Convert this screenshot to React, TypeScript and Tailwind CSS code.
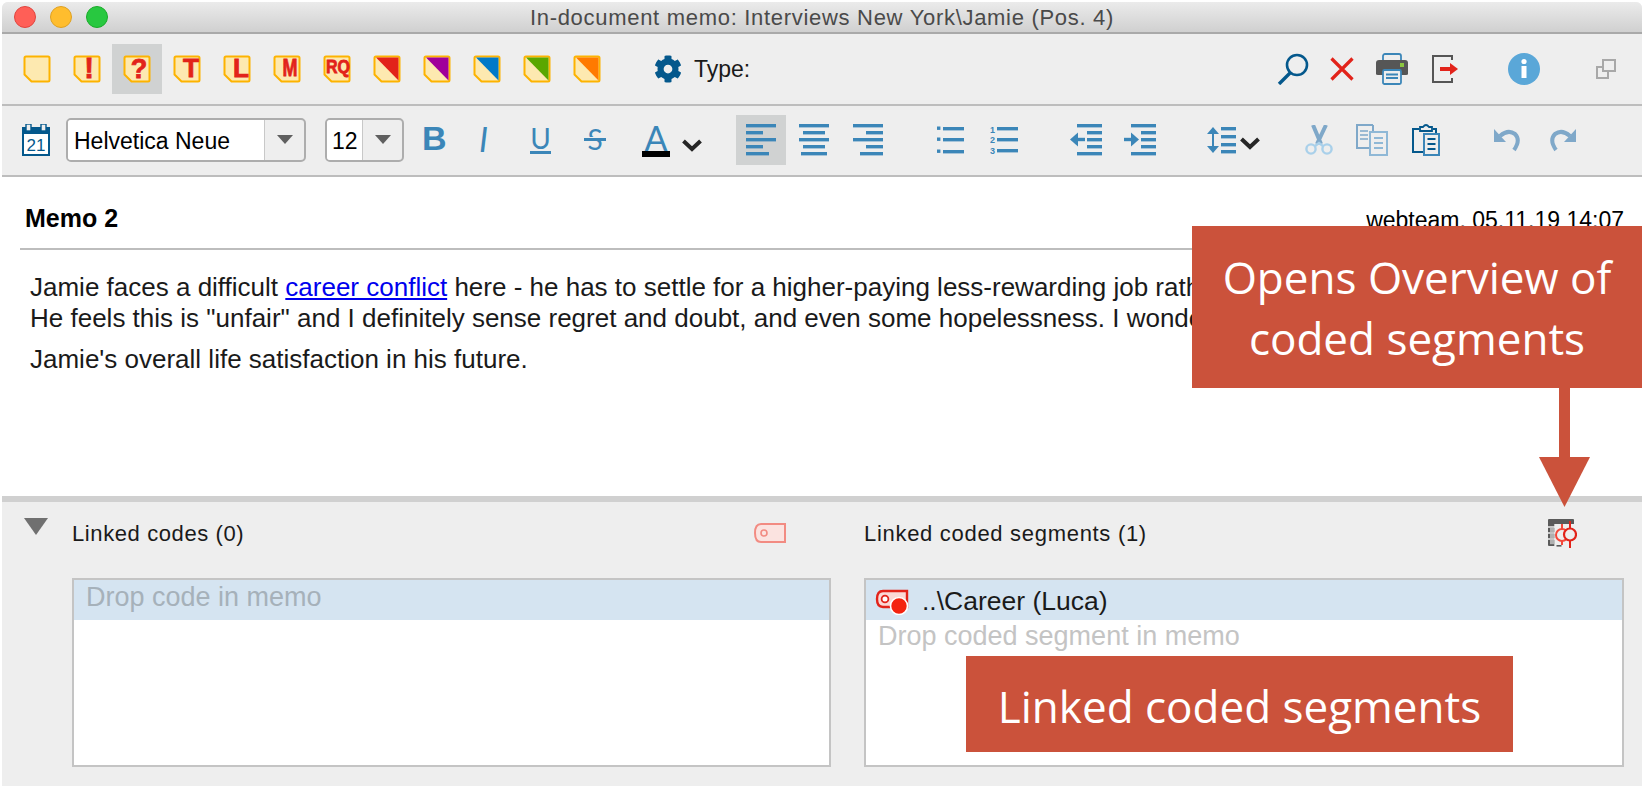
import React from 'react';
import { FaCog } from 'react-icons/fa';

const BLUE = '#3b86b8';
const NAVY = '#04588c';

type Memo = { letter?: string; size?: number; x?: number; y?: number; len?: number; corner?: string; active?: boolean };

const MemoIcon: React.FC<Memo> = ({ letter, size = 26, x = 17, y = 22, len, corner }) => (
  <svg width="40" height="44" viewBox="-6 -8 40 44">
    <path d="M3 1.5 H25 Q26.5 1.5 26.5 3 V25 Q26.5 26.5 25 26.5 H8.5 L1.5 19.5 V3 Q1.5 1.5 3 1.5 Z" fill="#fde9b0" stroke="#fdb300" strokeWidth="2" />
    {corner && <polygon points="3,2.5 25.5,2.5 25.5,25.5" fill={corner} />}
    {letter && (
      <text x={x} y={y} textAnchor="middle" fontFamily="Liberation Sans" fontWeight="700" fontSize={size} textLength={len} lengthAdjust="spacingAndGlyphs" fill="#e2231a" stroke="#e2231a" strokeWidth="0.8">
        {letter}
      </text>
    )}
  </svg>
);

const memos: Memo[] = [
  {},
  { letter: '!', size: 29, x: 16, y: 23 },
  { letter: '?', size: 27, x: 16, y: 23, active: true },
  { letter: 'T', size: 26, x: 18 },
  { letter: 'L', size: 26, x: 18 },
  { letter: 'M', size: 24, x: 17, y: 21, len: 15 },
  { letter: 'RQ', size: 19, x: 15, y: 18, len: 24 },
  { corner: '#e2231a' },
  { corner: '#a0009a' },
  { corner: '#0079c8' },
  { corner: '#5aa700' },
  { corner: '#ff7a00' },
];

const Lines: React.FC<{ w: number; h: number; bars: number[][]; color?: string; children?: React.ReactNode; className?: string }> = ({ w, h, bars, color = BLUE, children, className }) => (
  <svg width={w} height={h} viewBox={`0 0 ${w} ${h}`} className={className}>
    {bars.map((b, i) => (
      <rect key={i} x={b[0]} y={b[1]} width={b[2]} height={3.4} fill={color} />
    ))}
    {children}
  </svg>
);

const Chevron: React.FC<{ className?: string }> = ({ className }) => (
  <svg width="22" height="14" viewBox="0 0 22 14" className={className}>
    <path d="M2.5 3 L11 11 L19.5 3" fill="none" stroke="#262626" strokeWidth="4" />
  </svg>
);

const Select: React.FC<{ label: string; width: string; field: string; pad: string }> = ({ label, width, field, pad }) => (
  <div className={`flex h-[44px] overflow-hidden rounded-[5px] border-2 border-[#adadad] bg-[#eeeeee] ${width}`}>
    <div className={`flex items-center border-r border-[#c8c8c8] bg-white pt-[3px] text-[23px] leading-none text-black ${field} ${pad}`}>{label}</div>
    <div className="flex flex-1 items-center justify-center">
      <div className="h-0 w-0 border-x-[8px] border-t-[9px] border-x-transparent border-t-[#5f5f5f]" />
    </div>
  </div>
);

const TagIcon: React.FC = () => (
  <svg width="32" height="20" viewBox="0 0 32 20">
    <path d="M31 1 H7 Q1 1 1 10 Q1 19 7 19 H31 Z" fill="#fbe3e0" stroke="#f28b82" strokeWidth="2" />
    <circle cx="10" cy="10" r="3" fill="none" stroke="#f28b82" strokeWidth="1.6" />
  </svg>
);

const OverviewIcon: React.FC = () => (
  <svg width="30" height="30" viewBox="0 0 30 30">
    <path d="M2 1 H26 Q27 1 27 2 V6 H8 V28 H2 Q1 28 1 27 V2 Q1 1 2 1 Z" fill="#5a5a5a" />
    <path d="M1 9 H8 M1 15 H8 M1 21 H8 M8 6 V28 M8 28 H14" stroke="#eeeeee" strokeWidth="1.4" fill="none" />
    <rect x="3" y="9.8" width="4" height="4.4" fill="#b0b0b0" />
    <rect x="3" y="15.8" width="4" height="4.4" fill="#b0b0b0" />
    <rect x="3" y="21.8" width="4" height="4.4" fill="#b0b0b0" />
    <rect x="9.5" y="27" width="5" height="1.6" fill="#5a5a5a" />
    <path d="M15 6 V11 M15 23 V27" stroke="#f4483a" strokeWidth="2" />
    <circle cx="15" cy="17" r="6" fill="none" stroke="#f4483a" strokeWidth="2" />
    <path d="M23 3 V10 M23 23 V30" stroke="#e2231a" strokeWidth="2" />
    <circle cx="23" cy="16.5" r="6" fill="#eeeeee" stroke="#e2231a" strokeWidth="2.2" />
  </svg>
);

const App: React.FC = () => {
  return (
    <div className="relative h-[788px] w-[1644px] overflow-hidden bg-white p-[2px] font-['Liberation_Sans',sans-serif]">
      <div className="flex h-[784px] w-[1640px] flex-col overflow-hidden rounded-t-[6px] bg-[#eeeeee]">
        {/* title bar */}
        <div className="grid h-[32px] shrink-0 grid-cols-[1fr_auto_1fr] items-center border-b-2 border-[#a9a9a9] bg-gradient-to-b from-[#ebebeb] to-[#d0d0d0]">
          <div className="flex gap-[14px] pl-[12px]">
            <div className="h-[22px] w-[22px] rounded-full border border-[#e0443e] bg-[#ff5f57]" />
            <div className="h-[22px] w-[22px] rounded-full border border-[#dea123] bg-[#ffbd2e]" />
            <div className="h-[22px] w-[22px] rounded-full border border-[#1aab29] bg-[#28c840]" />
          </div>
          <div className="pt-[2px] text-[22px] leading-none tracking-[0.7px] text-[#4a4a4a]">In-document memo: Interviews New York\Jamie (Pos. 4)</div>
          <div />
        </div>

        {/* memo type toolbar */}
        <div className="flex h-[72px] shrink-0 items-center border-b-2 border-[#bdbdbd] pl-[10px] pr-[26px]">
          {memos.map((m, i) => (
            <div key={i} className={`flex h-[50px] w-[50px] items-center justify-center ${m.active ? 'bg-[#d0d2d2]' : ''}`}>
              <MemoIcon {...m} />
            </div>
          ))}
          <FaCog className="ml-[42px] text-[28px] text-[#04588c]" />
          <span className="ml-[12px] text-[23px] text-[#1a1a1a]">Type:</span>
          <div className="ml-auto flex items-center">
            <svg width="32" height="32" viewBox="0 0 32 32" className="-ml-px">
              <circle cx="20" cy="12" r="10" fill="none" stroke={NAVY} strokeWidth="2.6" />
              <path d="M13 20 L2 31" stroke={NAVY} strokeWidth="3.4" />
            </svg>
            <svg width="24" height="24" viewBox="0 0 24 24" className="ml-[21px]">
              <path d="M1.5 1.5 L22.5 22.5 M22.5 1.5 L1.5 22.5" stroke="#e2231a" strokeWidth="3.2" />
            </svg>
            <svg width="32" height="32" viewBox="0 0 32 32" className="ml-[22px]">
              <rect x="7" y="1" width="18" height="10" rx="2" fill="#eeeeee" stroke={BLUE} strokeWidth="1.8" />
              <path d="M3 7 H29 Q32 7 32 10 V21 Q32 22 30 22 H2 Q0 22 0 21 V10 Q0 7 3 7 Z" fill="#565656" />
              <rect x="24" y="10" width="4" height="4" fill="#8cc63f" />
              <rect x="7" y="17" width="18" height="14" rx="1.5" fill="#eeeeee" stroke={BLUE} strokeWidth="1.8" />
              <path d="M10 21.5 H22 M10 25 H22" stroke={BLUE} strokeWidth="1.8" />
            </svg>
            <svg width="26" height="28" viewBox="0 0 26 28" className="ml-[24px]">
              <path d="M20 5 V1 H1 V27 H20 V23" fill="none" stroke="#555555" strokeWidth="2" />
              <rect x="8" y="12" width="11" height="4" fill="#e2231a" />
              <polygon points="18,8 26,14 18,20" fill="#e2231a" />
            </svg>
            <svg width="32" height="32" viewBox="0 0 32 32" className="ml-[50px]">
              <circle cx="16" cy="16" r="16" fill="#5aa7d8" />
              <circle cx="16" cy="8.5" r="2.6" fill="#ffffff" />
              <rect x="13.5" y="13" width="5" height="12" fill="#ffffff" />
            </svg>
            <svg width="20" height="20" viewBox="0 0 20 20" className="ml-[56px]">
              <rect x="1" y="8" width="11" height="11" fill="none" stroke="#a8a8a8" strokeWidth="2" />
              <rect x="7" y="1" width="12" height="11" fill="#eeeeee" stroke="#a8a8a8" strokeWidth="2" />
            </svg>
          </div>
        </div>

        {/* format toolbar */}
        <div className="flex h-[71px] shrink-0 items-center border-b-2 border-[#bdbdbd] pl-[20px]">
          <svg width="28" height="32" viewBox="0 0 28 32" className="-mt-[2px]">
            <rect x="0" y="3" width="28" height="29" fill={NAVY} />
            <rect x="2" y="10" width="24" height="20" fill="#ffffff" />
            <rect x="4" y="0" width="5" height="7" fill="#eeeeee" stroke={NAVY} strokeWidth="1.4" />
            <rect x="19" y="0" width="5" height="7" fill="#eeeeee" stroke={NAVY} strokeWidth="1.4" />
            <text x="14" y="27" textAnchor="middle" fontFamily="Liberation Sans" fontSize="17" fill={NAVY}>21</text>
          </svg>
          <div className="-mt-[2px] ml-[16px]">
            <Select label="Helvetica Neue" width="w-[240px]" field="w-[197px]" pad="pl-[6px]" />
          </div>
          <div className="-mt-[2px] ml-[19px]">
            <Select label="12" width="w-[79px]" field="w-[36px]" pad="pl-[5px]" />
          </div>
          <span className="-mt-[6px] ml-[18px] w-[24px] text-[34px] font-bold leading-none text-[#3b86b8]">B</span>
          <span className="-mt-[4px] ml-[33px] w-[14px] font-['Lato',sans-serif] text-[34px] italic leading-none text-[#3b86b8]">I</span>
          <span className="-mt-[2px] ml-[37px] w-[21px] border-b-[3px] border-[#3b86b8] text-center font-['Lato',sans-serif] text-[28px] leading-[26px] text-[#3b86b8]">U</span>
          <span className="relative -mt-[4px] ml-[33px] w-[22px] text-center font-['Lato',sans-serif] text-[28px] leading-none text-[#3b86b8]">
            S
            <span className="absolute left-0 top-[12px] h-[4px] w-[22px] border-t border-[#eeeeee] bg-[#3b86b8]" />
          </span>
          <span className="ml-[36px] flex w-[28px] flex-col items-center">
            <span className="font-['Lato',sans-serif] text-[34px] leading-[26px] text-[#3b86b8]">A</span>
            <span className="h-[6px] w-[28px] bg-black" />
          </span>
          <Chevron className="ml-[11px] mt-[8px]" />

          <div className="-mt-[2px] ml-[33px] flex h-[50px] w-[50px] items-center justify-center bg-[#d0d2d2]">
            <Lines w={30} h={32} bars={[[0, 0, 30], [0, 7, 17], [0, 14, 30], [0, 21, 17], [0, 28, 23]]} />
          </div>
          <Lines className="-mt-[2px] ml-[13px]" w={30} h={32} bars={[[0, 0, 30], [4, 7, 22], [0, 14, 30], [4, 21, 22], [2, 28, 26]]} />
          <Lines className="-mt-[2px] ml-[24px]" w={30} h={32} bars={[[0, 0, 30], [13, 7, 17], [0, 14, 30], [13, 21, 17], [7, 28, 23]]} />
          <Lines className="-mt-[2px] ml-[54px]" w={27} h={28} bars={[[6, 1, 21], [6, 12, 21], [6, 24, 21]]}>
            <rect x="0" y="0.5" width="3.4" height="3.4" fill={BLUE} />
            <rect x="0" y="11.5" width="3.4" height="3.4" fill={BLUE} />
            <rect x="0" y="23.5" width="3.4" height="3.4" fill={BLUE} />
          </Lines>
          <Lines className="-mt-[2px] ml-[26px]" w={28} h={34} bars={[[7, 4, 21], [7, 15, 21], [7, 26, 21]]}>
            <text x="2.5" y="10" textAnchor="middle" fontFamily="Liberation Sans" fontWeight="700" fontSize="9" fill={BLUE}>1</text>
            <text x="2.5" y="20" textAnchor="middle" fontFamily="Liberation Sans" fontWeight="700" fontSize="9" fill={BLUE}>2</text>
            <text x="2.5" y="31" textAnchor="middle" fontFamily="Liberation Sans" fontWeight="700" fontSize="9" fill={BLUE}>3</text>
          </Lines>
          <Lines className="-mt-[2px] ml-[52px]" w={32} h={32} bars={[[7, 0, 25], [17, 7, 15], [17, 14, 15], [17, 21, 15], [7, 28, 25]]}>
            <polygon points="0,15.5 8,8.5 8,22.5" fill={BLUE} />
            <rect x="7" y="13.8" width="8" height="3.4" fill={BLUE} />
          </Lines>
          <Lines className="-mt-[2px] ml-[22px]" w={32} h={32} bars={[[7, 0, 25], [17, 7, 15], [17, 14, 15], [17, 21, 15], [7, 28, 25]]}>
            <polygon points="15,15.5 7,8.5 7,22.5" fill={BLUE} />
            <rect x="0" y="13.8" width="8" height="3.4" fill={BLUE} />
          </Lines>
          <Lines className="-mt-[2px] ml-[51px]" w={29} h={28} bars={[[14, 1, 15], [14, 9, 15], [14, 17, 15], [14, 24, 15]]}>
            <polygon points="6,1 12,8 0,8" fill={BLUE} />
            <polygon points="6,27 12,20 0,20" fill={BLUE} />
            <rect x="5" y="7" width="2" height="14" fill={BLUE} />
          </Lines>
          <Chevron className="ml-[3px] mt-[4px]" />
          <svg width="28" height="30" viewBox="0 0 28 30" className="-mt-[2px] ml-[44px]">
            <path d="M8 0 L16 19 M21 0 L12 19" stroke="#7fa8c9" strokeWidth="4" />
            <circle cx="6" cy="24" r="4.6" fill="none" stroke="#a9d0ea" strokeWidth="2.4" />
            <circle cx="22" cy="24" r="4.6" fill="none" stroke="#a9d0ea" strokeWidth="2.4" />
            <path d="M10 21 L14 18 L18 21" fill="none" stroke="#a9d0ea" strokeWidth="2.4" />
          </svg>
          <svg width="32" height="32" viewBox="0 0 32 32" className="-mt-[2px] ml-[23px]">
            <path d="M17 1 H1 V24 H13" fill="none" stroke="#7fa8c9" strokeWidth="2" />
            <path d="M17 1 V7" stroke="#7fa8c9" strokeWidth="2" />
            <path d="M4 7 H12 M4 11 H12 M4 15 H12" stroke="#7fa8c9" strokeWidth="1.6" />
            <rect x="14" y="8" width="17" height="23" fill="#eeeeee" stroke="#8fb8d6" strokeWidth="2" />
            <path d="M18 14 H27 M18 19 H27 M18 24 H27" stroke="#8fb8d6" strokeWidth="2" />
          </svg>
          <svg width="28" height="32" viewBox="0 0 28 32" className="-mt-[2px] ml-[24px]">
            <path d="M7 5 H1 V28 H11 M21 5 H24 V9" fill="none" stroke={NAVY} strokeWidth="2" />
            <path d="M8 6 V3 H11 Q14 -1 17 3 H20 V7 H8 Z" fill="#eeeeee" stroke={NAVY} strokeWidth="1.8" />
            <rect x="12" y="10" width="15" height="21" fill="#eeeeee" stroke={BLUE} strokeWidth="2" />
            <path d="M15.5 15 H23.5 M15.5 20 H23.5 M15.5 25 H23.5" stroke={NAVY} strokeWidth="2" />
          </svg>
          <svg width="27" height="24" viewBox="0 0 27 24" className="-mt-[2px] ml-[54px]">
            <polygon points="0,14 12,14 0,1" fill="#7fa8c9" />
            <path d="M6 8 Q14 1 21 6 Q27 12 20 22" fill="none" stroke="#7fa8c9" strokeWidth="4" />
          </svg>
          <svg width="27" height="24" viewBox="0 0 27 24" className="-mt-[2px] ml-[28px]">
            <polygon points="27,14 15,14 27,1" fill="#7fa8c9" />
            <path d="M21 8 Q13 1 6 6 Q0 12 7 22" fill="none" stroke="#7fa8c9" strokeWidth="4" />
          </svg>
        </div>

        {/* memo text */}
        <div className="h-[319px] shrink-0 overflow-hidden bg-white">
          <div className="mx-[18px] flex h-[73px] items-end justify-between border-b-2 border-[#bdbdbd] pb-[17px] pl-[5px]">
            <span className="text-[25px] font-bold leading-none text-black">Memo 2</span>
            <span className="-mb-[1px] text-[23px] leading-none text-black">webteam, 05.11.19 14:07</span>
          </div>
          <div className="whitespace-nowrap pl-[28px] pt-[22px] text-[26px] leading-[31px] text-[#1a1a1a]">
            <p>
              Jamie faces a difficult <a className="text-[#0000ee] underline">career conflict</a> here - he has to settle for a higher-paying less-rewarding job rather
            </p>
            <p>He feels this is "unfair" and I definitely sense regret and doubt, and even some hopelessness. I wonder</p>
            <p className="mt-[10px]">Jamie's overall life satisfaction in his future.</p>
          </div>
        </div>

        {/* linked items */}
        <div className="flex flex-1 border-t-[6px] border-[#d0d0d0]">
          <div className="ml-[22px] mt-[16px] h-0 w-0 border-x-[12px] border-t-[17px] border-x-transparent border-t-[#707070]" />
          <div className="ml-[24px] w-[759px]">
            <div className="flex h-[62px] items-center justify-between pr-[45px]">
              <span className="text-[22px] tracking-[0.6px] text-[#1a1a1a]">Linked codes (0)</span>
              <TagIcon />
            </div>
            <div className="mt-[14px] h-[189px] border-2 border-[#c4c4c4] bg-white">
              <div className="h-[40px] bg-[#d5e4f1] pl-[12px] text-[27px] leading-[34px] text-[#a6b1ba]">Drop code in memo</div>
            </div>
          </div>
          <div className="ml-[33px] w-[760px]">
            <div className="flex h-[62px] items-center justify-between pr-[47px]">
              <span className="text-[22px] tracking-[0.7px] text-[#1a1a1a]">Linked coded segments (1)</span>
              <OverviewIcon />
            </div>
            <div className="mt-[14px] h-[189px] border-2 border-[#c4c4c4] bg-white">
              <div className="flex h-[40px] items-center bg-[#d5e4f1] pl-[10px] text-[26.5px] text-[#1a1a1a]">
                <svg width="34" height="26" viewBox="0 0 34 26" className="-ml-[1px] mt-[3px]">
                  <path d="M32 2 H8 Q2 2 2 10 Q2 18 8 18 H32 Z" fill="#fbd9d6" stroke="#e2231a" strokeWidth="2.4" />
                  <circle cx="10" cy="10" r="3.4" fill="#ffffff" stroke="#e2231a" strokeWidth="1.8" />
                  <circle cx="24" cy="17" r="8.5" fill="#f4230f" stroke="#ffffff" strokeWidth="1.6" />
                </svg>
                <span className="ml-[13px] pt-[3px]">..\Career (Luca)</span>
              </div>
              <div className="pl-[12px] pt-[2px] text-[27px] leading-[28px] text-[#c4c4c4]">Drop coded segment in memo</div>
            </div>
          </div>
        </div>
      </div>

      {/* callouts */}
      <div className="absolute left-[1192px] top-[226px] flex h-[162px] w-[450px] flex-col items-center justify-center bg-[#cb523b] pt-[1px] text-center font-['Open_Sans',sans-serif] text-[44px] leading-[61px] text-white">
        <span>Opens Overview of</span>
        <span>coded segments</span>
      </div>
      <svg width="52" height="120" viewBox="0 0 52 120" className="absolute left-[1539px] top-[388px]">
        <rect x="20" y="0" width="11" height="70" fill="#cb523b" />
        <polygon points="0,69 51,69 25.5,119" fill="#cb523b" />
      </svg>
      <div className="absolute left-[966px] top-[656px] flex h-[96px] w-[547px] items-center justify-center bg-[#cb523b] pt-[3px] font-['Open_Sans',sans-serif] text-[44px] text-white">
        Linked coded segments
      </div>
    </div>
  );
};

export default App;
